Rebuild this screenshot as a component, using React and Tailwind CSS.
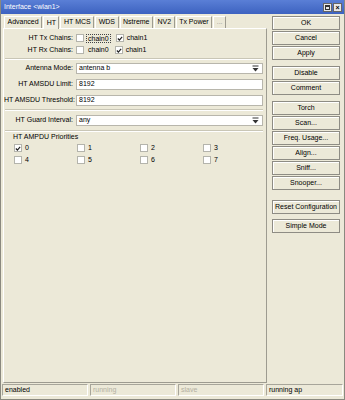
const font = { fontFamily: '"Liberation Sans", Arial, sans-serif' };

function Check({ on }) {
  return (
    <span className="w-[8px] h-[8px] bg-white border border-[#b4b4ac] flex items-center justify-center shrink-0">
      {on && (
        <svg width="7" height="7" viewBox="0 0 7 7">
          <path d="M1 3.5 L2.8 5.3 L6 1.5" stroke="#222" strokeWidth="1.4" fill="none" />
        </svg>
      )}
    </span>
  );
}

function Arrow() {
  return (
    <svg width="7" height="7" viewBox="0 0 7 7" className="shrink-0">
      <rect x="0.5" y="0.5" width="6" height="1" fill="#333" />
      <path d="M0.5 3 H6.5 L3.5 6.5 Z" fill="#333" />
    </svg>
  );
}

function Sep() {
  return <div className="h-[2px] border-t border-[#c9c6b6] border-b border-b-white" />;
}

function Field({ label, value, select }) {
  return (
    <div className="flex items-center h-[11px]">
      <span className="w-[72px] text-right pr-[3px] whitespace-nowrap">{label}</span>
      <div className="flex-1 h-[11px] bg-white border border-[#b8b6ac] flex items-center pl-[2px] pr-[3px]">
        <span className="flex-1">{value}</span>
        {select && <Arrow />}
      </div>
    </div>
  );
}

function Btn({ children, className = "" }) {
  return (
    <div className={"w-[68px] h-[14px] border border-[#8e8c84] bg-[#ece9d8] flex items-center justify-center shadow-[inset_1px_1px_0_#fff] " + className}>
      {children}
    </div>
  );
}

const tabs = ["Advanced", "HT", "HT MCS", "WDS", "Nstreme", "NV2", "Tx Power", "..."];

export default function App() {
  return (
    <div style={font} className="w-[345px] h-[400px] bg-[#ece9d8] flex flex-col text-[7px] text-black border-x border-b border-[#8a897f] overflow-hidden">
      <div className="h-[14px] bg-gradient-to-b from-[#5a7fd6] to-[#3d62c0] flex items-center pl-[3px] pr-[2px] shrink-0">
        <span className="text-white flex-1">Interface &lt;wlan1&gt;</span>
        <div className="flex gap-[1px]">
          <span className="w-[9px] h-[9px] bg-[#e8e8e8] border border-[#666] flex items-center justify-center">
            <span className="w-[5px] h-[5px] border border-[#333] border-t-2" />
          </span>
          <span className="w-[9px] h-[9px] bg-[#e8e8e8] border border-[#666] flex items-center justify-center text-[7px] font-bold leading-none">×</span>
        </div>
      </div>

      <div className="flex flex-1 min-h-0">
        <div className="w-[266px] flex flex-col pl-[2px] pt-[1px]">
          <div className="flex items-end h-[13px] pl-[1px] gap-[1px]">
            {tabs.map((t) => (
              <div
                key={t}
                className={
                  "px-[2.5px] flex items-center whitespace-nowrap border-t border-l border-white border-r border-r-[#9d9b90] " +
                  (t === "HT" ? "h-[13px] bg-[#f1efe4] -mb-[1px] relative z-10" : "h-[12px] bg-[#ece9d8]") +
                  (t === "..." ? " text-[#999]" : "")
                }
              >
                {t}
              </div>
            ))}
          </div>
          <div className="flex-1 border-t border-l border-white border-r border-b border-r-[#9d9b90] border-b-[#9d9b90] mb-[1px] pt-[3px] pr-[3px] flex flex-col">
            <div className="flex items-center h-[12px]">
              <span className="w-[72px] text-right pr-[3px]">HT Tx Chains:</span>
              <Check />
              <span className="ml-[2px] px-[1px] border border-dotted border-[#444] leading-none">chain0</span>
              <span className="ml-[5px]"><Check on /></span>
              <span className="ml-[3px]">chain1</span>
            </div>
            <div className="flex items-center h-[12px]">
              <span className="w-[72px] text-right pr-[3px]">HT Rx Chains:</span>
              <Check />
              <span className="ml-[3px] px-[1px]">chain0</span>
              <span className="ml-[5px]"><Check on /></span>
              <span className="ml-[3px]">chain1</span>
            </div>
            <div className="mt-[2px] ml-[1px]"><Sep /></div>
            <div className="flex flex-col gap-[5px] mt-[3px]">
              <Field label="Antenna Mode:" value="antenna b" select />
              <Field label="HT AMSDU Limit:" value="8192" />
              <Field label="HT AMSDU Threshold:" value="8192" />
            </div>
            <div className="mt-[3px] ml-[1px]"><Sep /></div>
            <div className="mt-[4px]">
              <Field label="HT Guard Interval:" value="any" select />
            </div>
            <div className="mt-[4px] ml-[1px]"><Sep /></div>
            <div className="pl-[9px] mt-[1px] h-[9px] flex items-center">HT AMPDU Priorities</div>
            <div className="grid grid-cols-4 pl-[10px] mt-[2px] gap-y-[4px] w-[262px]">
              {[0, 1, 2, 3, 4, 5, 6, 7].map((n) => (
                <div key={n} className="flex items-center h-[8px] gap-[3px]">
                  <Check on={n === 0} />
                  <span>{n}</span>
                </div>
              ))}
            </div>
          </div>
        </div>

        <div className="flex-1 flex flex-col pl-[5px] pt-[2px] gap-[1px]">
          <Btn>OK</Btn>
          <Btn>Cancel</Btn>
          <Btn>Apply</Btn>
          <Btn className="mt-[5px]">Disable</Btn>
          <Btn>Comment</Btn>
          <Btn className="mt-[5px]">Torch</Btn>
          <Btn>Scan...</Btn>
          <Btn>Freq. Usage...</Btn>
          <Btn>Align...</Btn>
          <Btn>Sniff...</Btn>
          <Btn>Snooper...</Btn>
          <Btn className="mt-[9px]">Reset Configuration</Btn>
          <Btn className="mt-[4px]">Simple Mode</Btn>
        </div>
      </div>

      <div className="h-[12px] flex mb-[3px] mx-[1px] gap-[2px] shrink-0">
        <div className="w-[86px] border-t border-l border-[#a7a59a] border-b border-r border-b-white border-r-white flex items-center pl-[2px]">enabled</div>
        <div className="w-[86px] border-t border-l border-[#a7a59a] border-b border-r border-b-white border-r-white flex items-center pl-[2px] text-[#b3b0a2]">running</div>
        <div className="w-[86px] border-t border-l border-[#a7a59a] border-b border-r border-b-white border-r-white flex items-center pl-[2px] text-[#b3b0a2]">slave</div>
        <div className="flex-1 border-t border-l border-[#a7a59a] border-b border-r border-b-white border-r-white flex items-center pl-[2px]">running ap</div>
      </div>
    </div>
  );
}
